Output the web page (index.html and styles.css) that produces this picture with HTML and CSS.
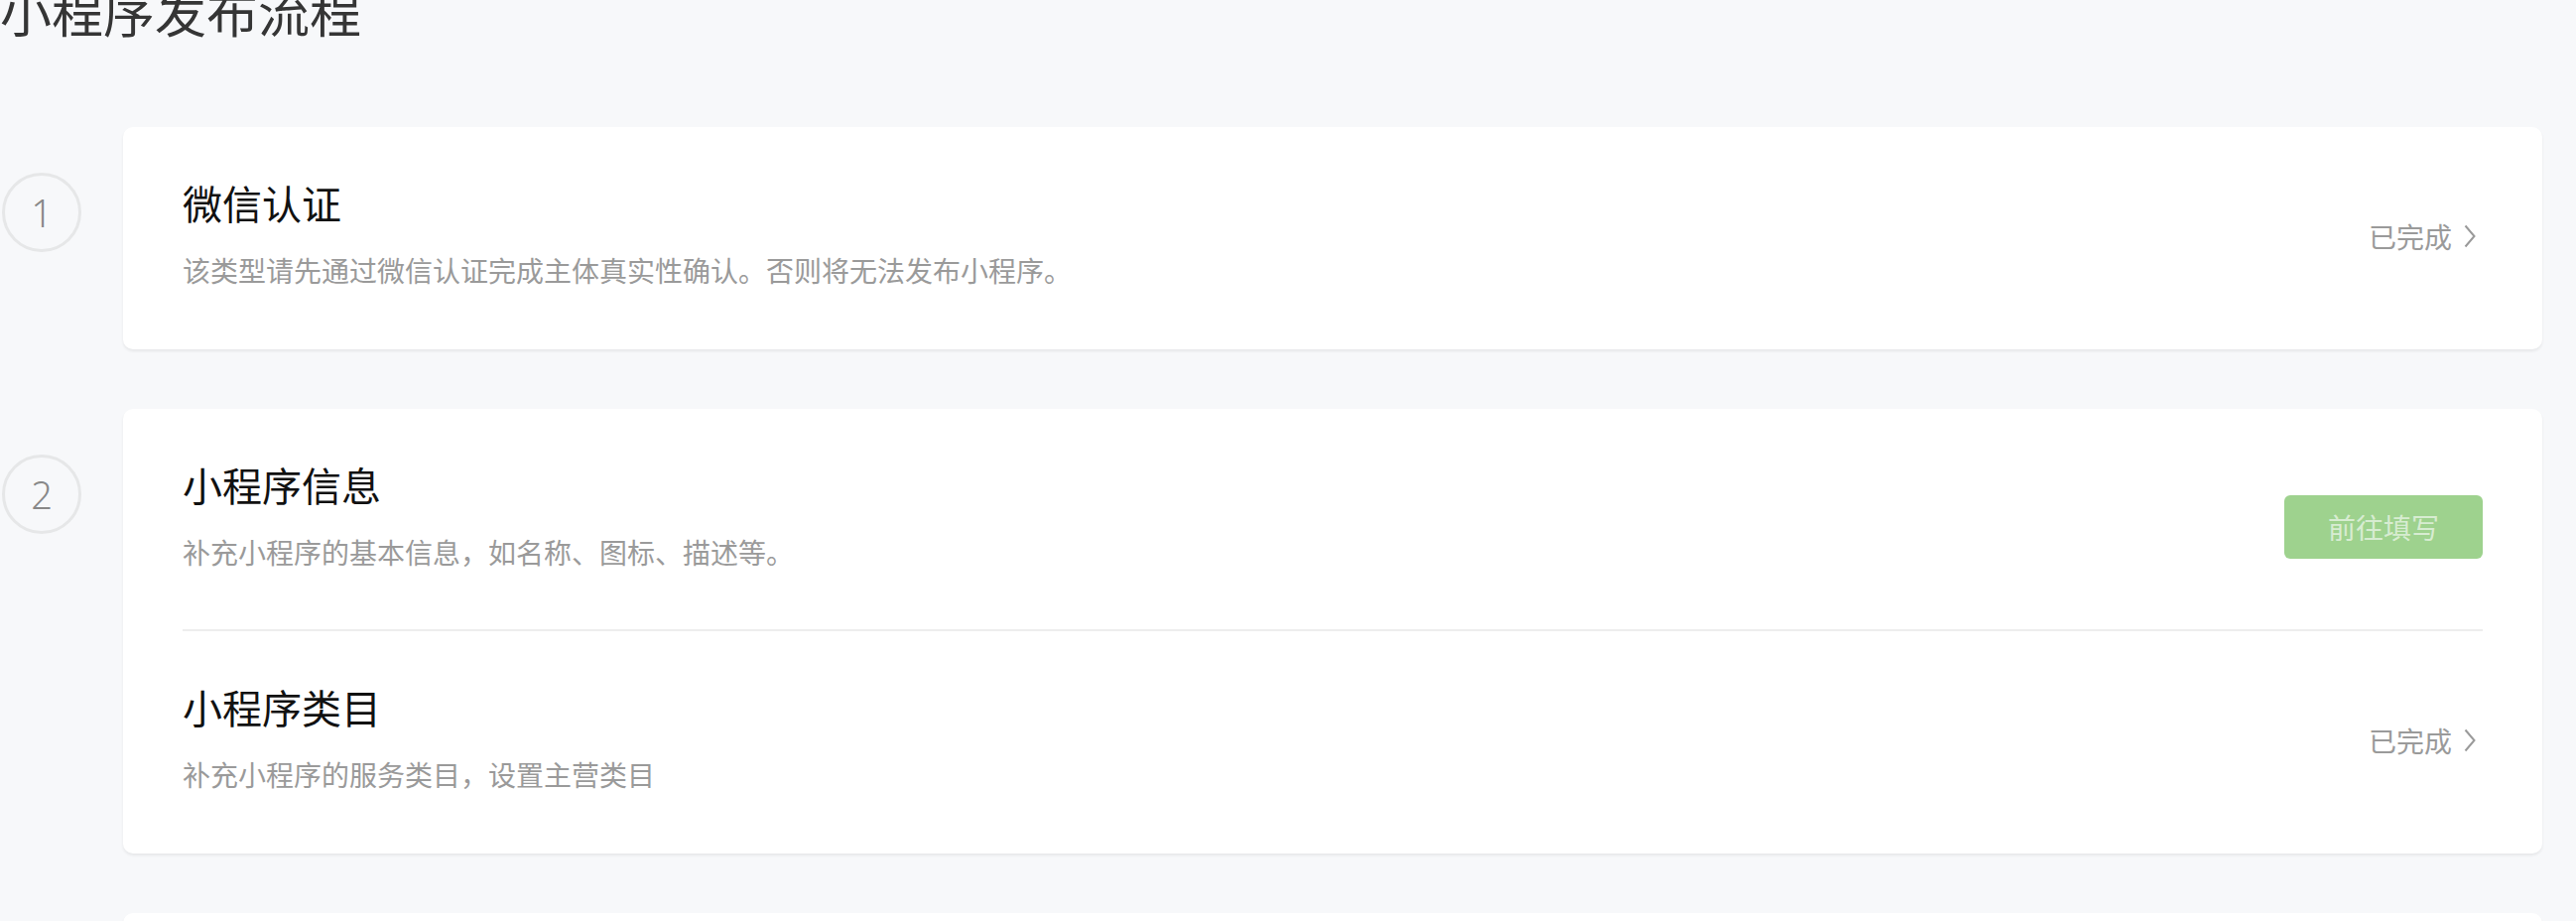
FILE: index.html
```html
<!DOCTYPE html>
<html lang="zh-CN">
<head>
<meta charset="utf-8">
<title>小程序发布流程</title>
<link rel="stylesheet" href="styles.css">
</head>
<body>
<div class="page">
  <h1 class="page-title">小程序发布流程</h1>
  <div class="steps">
    <div class="step">
      <div class="step-index"><div class="circle">1</div></div>
      <div class="card">
        <div class="row">
          <div class="row-main">
            <div class="row-title">微信认证</div>
            <div class="row-desc">该类型请先通过微信认证完成主体真实性确认。否则将无法发布小程序。</div>
          </div>
          <a class="status">已完成<svg class="chev" width="12" height="24" viewBox="0 0 12 24"><path d="M1.5 1.5 L10.5 12 L1.5 22.5" fill="none" stroke="#9a9a9a" stroke-width="2"/></svg></a>
        </div>
      </div>
    </div>
    <div class="step">
      <div class="step-index"><div class="circle">2</div></div>
      <div class="card">
        <div class="row">
          <div class="row-main">
            <div class="row-title">小程序信息</div>
            <div class="row-desc">补充小程序的基本信息，如名称、图标、描述等。</div>
          </div>
          <button class="btn-primary" disabled>前往填写</button>
        </div>
        <div class="row">
          <div class="row-main">
            <div class="row-title">小程序类目</div>
            <div class="row-desc">补充小程序的服务类目，设置主营类目</div>
          </div>
          <a class="status">已完成<svg class="chev" width="12" height="24" viewBox="0 0 12 24"><path d="M1.5 1.5 L10.5 12 L1.5 22.5" fill="none" stroke="#9a9a9a" stroke-width="2"/></svg></a>
        </div>
      </div>
    </div>
    <div class="step">
      <div class="step-index"></div>
      <div class="card card-empty"></div>
    </div>
  </div>
</div>
</body>
</html>
```

FILE: styles.css
```css
html, body {
  margin: 0;
  padding: 0;
  background: #f7f8fa;
  font-family: "Noto Sans CJK SC", "Noto Sans", sans-serif;
  overflow: hidden;
}

.page {
  padding: 0 34px 0 0;
}

.page-title {
  margin: -15px 0 0 0;
  font-size: 52px;
  line-height: 52px;
  font-weight: 400;
  color: #353535;
}

.steps {
  margin-top: 91px;
  display: flex;
  flex-direction: column;
  gap: 60px;
}

.step {
  display: flex;
  align-items: flex-start;
}

.step-index {
  flex: none;
  width: 124px;
}

.circle {
  box-sizing: border-box;
  width: 80px;
  height: 80px;
  margin: 46px 0 0 2px;
  border: 3px solid #e6e7e8;
  border-radius: 50%;
  display: flex;
  align-items: center;
  justify-content: center;
  font-family: "Noto Sans", "Noto Sans CJK SC", sans-serif;
  font-size: 38px;
  font-weight: 300;
  color: #888888;
}

.card {
  flex: 1;
  background: #ffffff;
  border-radius: 10px;
  box-shadow: 0 2px 3px rgba(0, 0, 0, 0.07);
  padding: 0 60px;
}

.card-empty {
  height: 224px;
}

.row {
  box-sizing: border-box;
  height: 224px;
  display: flex;
  align-items: center;
  justify-content: space-between;
}

.row:not(:last-child) {
  border-bottom: 2px solid #ededed;
}

.row-main {
  align-self: flex-start;
  padding-top: 48px;
}

.row-title {
  font-size: 40px;
  line-height: 56px;
  color: #111111;
}

.row-desc {
  margin-top: 20px;
  font-size: 28px;
  line-height: 40px;
  color: #9a9a9a;
}

.status {
  display: flex;
  align-items: center;
  gap: 12px;
  margin-top: -4px;
  margin-right: 7px;
  font-size: 28px;
  line-height: 40px;
  color: #9a9a9a;
}

.chev {
  display: block;
}

.btn-primary {
  width: 200px;
  height: 64px;
  margin-top: 16px;
  border: none;
  border-radius: 6px;
  background: #9ed28e;
  color: rgba(255, 255, 255, 0.62);
  font-family: "Noto Sans CJK SC", "Noto Sans", sans-serif;
  font-size: 28px;
  padding: 0;
}
```
